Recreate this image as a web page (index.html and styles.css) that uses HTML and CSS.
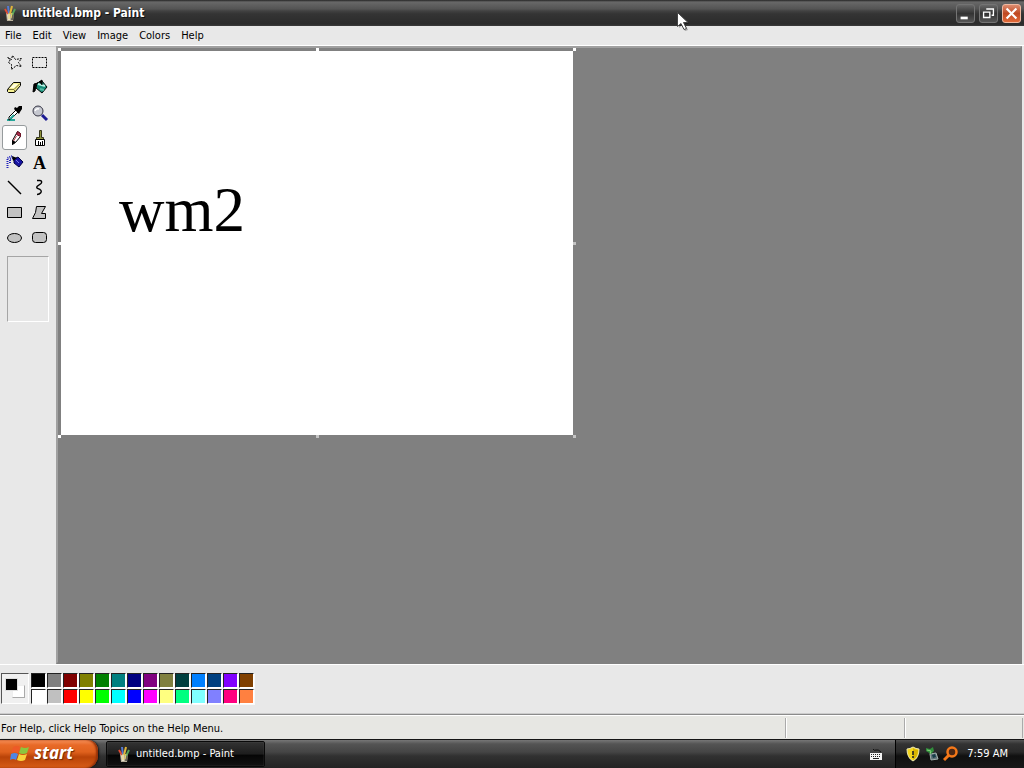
FILE: index.html
```html
<!DOCTYPE html>
<html lang="en">
<head>
<meta charset="utf-8">
<title>untitled.bmp - Paint</title>
<link rel="stylesheet" href="styles.css">
</head>
<body>
<svg class="defs" aria-hidden="true">
  <symbol id="paint" viewBox="0 0 16 16">
    <path d="M4 8h8l-1 8H5z" fill="#b9b19c"/>
    <path d="M5 9l1 6h2V9z" fill="#e8e1cb"/><path d="M10 9h2l-1 6H9z" fill="#686455"/>
    <path d="M3 4l3 5" stroke="#e34b31" stroke-width="2"/>
    <path d="M6 1l1 8" stroke="#5579d0" stroke-width="2"/>
    <path d="M10 1L8 9" stroke="#e0b43b" stroke-width="2"/>
    <path d="M13 4l-3 6" stroke="#55a35a" stroke-width="2"/>
    <path d="M7 8v6M10 8l-1 5" stroke="#e9d36a"/>
  </symbol>
</svg>
<main class="window">
  <header class="titlebar">
    <svg class="icon16"><use href="#paint"/></svg>
    <h1 class="title">untitled.bmp - Paint</h1>
    <div class="controls">
      <button class="control" aria-label="Minimize"><svg viewBox="0 0 19 19"><path d="M4 13h8v3H4z" fill="#fff"/></svg></button>
      <button class="control" aria-label="Restore"><svg viewBox="0 0 19 19" fill="none" stroke="#fff"><path d="M7 4.500h8v7h-2" stroke-width="1.500"/><path d="M4 8h7v6H4z" stroke-width="1.500"/></svg></button>
      <button class="control close" aria-label="Close"><svg viewBox="0 0 19 19"><path d="M4 4l11 11m0-11L4 15" stroke="#fff" stroke-width="2.400"/></svg></button>
    </div>
  </header>
  <nav class="menubar">
    <button class="menu">File</button><button class="menu">Edit</button><button class="menu">View</button><button class="menu">Image</button><button class="menu">Colors</button><button class="menu">Help</button>
  </nav>
  <div class="body">
    <aside class="toolbox">
      <div class="tools">
        <button class="tool" aria-label="Free-form select"><svg viewBox="0 0 25 25"><path d="M5.500 7.500l4 2 1-4 3 4 6-1-3 4 3 4-5-1-5 4 0-5-3-2 2-3z" fill="none" stroke="#000" stroke-dasharray="2 1"/></svg></button>
        <button class="tool" aria-label="Select"><svg viewBox="0 0 25 25"><path d="M5.500 7.500h14v10h-14z" fill="none" stroke="#000" stroke-dasharray="2 1"/></svg></button>
        <button class="tool" aria-label="Eraser"><svg viewBox="0 0 25 25"><path d="M5.500 14.500l6-7h7v3l-6 7h-6l-1-1z" fill="#f5f090" stroke="#000"/><path d="M6 14.500h6l6-6M12.500 15v2" fill="none" stroke="#77713b"/><path d="M8 13l4-4h4l-4 4z" fill="#fffde0"/></svg></button>
        <button class="tool" aria-label="Fill"><svg viewBox="0 0 25 25"><path d="M10 8l5-2 5 6-5 6-6-5z" fill="#178b77" stroke="#000"/><path d="M11 9l7 2" stroke="#b9f1e4" stroke-width="2"/><path d="M15 10V5l-3 2M11 8l-4 1-1 8 2-1 1-6" fill="#000" stroke="#000"/><path d="M13 14l4 1" stroke="#55bba5" stroke-width="2"/></svg></button>
        <button class="tool" aria-label="Pick color"><svg viewBox="0 0 25 25"><path d="M5 19h8v2H5z" fill="#25a699"/><path d="M7 20v-3l7-7 2 2-7 7z" fill="#fff" stroke="#000"/><path d="M8 19l4-4" stroke="#24a69a" stroke-width="2"/><path d="M12 9l5 5 1-2 2-3V6h-3l-2 2-2-1z"/></svg></button>
        <button class="tool" aria-label="Magnifier"><svg viewBox="0 0 25 25"><circle cx="11" cy="11" r="5" fill="#c5c7cf" stroke="#353544"/><path d="M8 11q1-3 4-2" fill="none" stroke="#fff" stroke-width="1.500"/><path d="M15 15l5 5" stroke="#1c1b92" stroke-width="3"/></svg></button>
        <button class="tool active" aria-label="Pencil" aria-pressed="true"><svg viewBox="0 0 23 23"><path d="M9.500 18.500v-4l5-9 3 2v3l-5 6z" fill="#fff" stroke="#000"/><path d="M14.500 5.500l3 2v3l-4-2z" fill="#ad3150" stroke="#701326"/><path d="M13.500 10l-3 5" stroke="#bd3c4d"/><path d="M9 14l4 2-4 3z"/></svg></button>
        <button class="tool" aria-label="Brush"><svg viewBox="0 0 25 25"><path d="M12.500 5.500h2v7h2v3h-7v-3h3z" fill="#8d923b" stroke="#34351b"/><path d="M8.500 14.500h9v6h-9z" fill="#fff" stroke="#000"/><path d="M11.500 16v4m2-3v3m2-4v4" stroke="#000"/></svg></button>
        <button class="tool" aria-label="Airbrush"><svg viewBox="0 0 25 25"><path d="M5.500 18V8l5-2M8 13V9l3-1" fill="none" stroke="#2223bb" stroke-width="2" stroke-dasharray="1 1"/><path d="M12 9l4-2 5 5-4 5-5-4z" fill="#1713a2" stroke="#000040"/><path d="M10 6l5 2-4 3z"/><path d="M14 10l3 3" stroke="#7776ec"/></svg></button>
        <button class="tool" aria-label="Text"><span class="letter">A</span></button>
        <button class="tool" aria-label="Line"><svg viewBox="0 0 25 25"><path d="M6 6l13 13" stroke="#000" stroke-width="1.400"/></svg></button>
        <button class="tool" aria-label="Curve"><svg viewBox="0 0 25 25"><path d="M10 5.500h3c2 0 2 2 1 3l-4 3c-1 2 1 2 3 3 3 2 0 5-3 5" fill="none" stroke="#000" stroke-width="1.400"/></svg></button>
        <button class="tool" aria-label="Rectangle"><svg viewBox="0 0 25 25"><path d="M5.500 7.500h14v10h-14z" fill="#c2c2c2" stroke="#000"/></svg></button>
        <button class="tool" aria-label="Polygon"><svg viewBox="0 0 25 25"><path d="M9.500 6.500h9l-4 7h4v5h-13l3-6z" fill="#c2c2c2" stroke="#000"/></svg></button>
        <button class="tool" aria-label="Ellipse"><svg viewBox="0 0 25 25"><ellipse cx="12.500" cy="13" rx="7" ry="4.500" fill="#c2c2c2" stroke="#000"/></svg></button>
        <button class="tool" aria-label="Rounded rectangle"><svg viewBox="0 0 25 25"><rect x="5.500" y="7.500" width="14" height="10" rx="3" fill="#c2c2c2" stroke="#000"/></svg></button>
      </div>
      <div class="options"></div>
    </aside>
    <section class="workspace" aria-label="Drawing area">
      <div class="canvas">
        <span class="drawn">wm2</span>
        <i class="handle top left"></i><i class="handle top mid"></i><i class="handle top right"></i>
        <i class="handle center left"></i><i class="handle center right"></i>
        <i class="handle bottom left"></i><i class="handle bottom mid"></i><i class="handle bottom right"></i>
      </div>
    </section>
  </div>
  <section class="colorbox" aria-label="Colors">
    <div class="current"><i class="back"></i><i class="fore"></i></div>
    <div class="palette" id="palette"></div>
  </section>
  <footer class="statusbar">
    <span class="help">For Help, click Help Topics on the Help Menu.</span><span class="cell"></span><span class="cell"></span>
  </footer>
</main>
<footer class="taskbar">
  <button class="start">
    <svg viewBox="0 0 20 18"><path d="M3 3q4-2 7 0L8 9Q5 7 1 9z" fill="#ed5a27"/><path d="M11 3q4 2 8 0l-2 6q-4 2-8 0z" fill="#8cc63e"/><path d="M1 10q4-2 7 0l-2 6q-3-2-6 0z" fill="#4f86e4"/><path d="M9 10q4 2 8 0l-2 6q-4 2-8 0z" fill="#f9d23b"/></svg>
    <span>start</span>
  </button>
  <button class="task"><svg class="icon16"><use href="#paint"/></svg><span>untitled.bmp - Paint</span></button>
  <button class="keyboard" aria-label="Keyboard"><svg viewBox="0 0 14 14"><path d="M4 2q1 2 3 1t5 2" fill="none" stroke="#111"/><path d="M1 6h12v7H1z" fill="#f4f4f4"/><path d="M2 7.500h10M2 9.500h10" stroke="#222" stroke-dasharray="1 1"/><path d="M4 11.500h6" stroke="#222"/></svg></button>
  <div class="tray">
    <svg class="icon16" viewBox="0 0 16 16"><path d="M8 1q3 2 6 2 0 9-6 12Q2 12 2 3q3 0 6-2z" fill="#f4d61d" stroke="#eee9b0"/><path d="M8 2v12q5-3 5-10-3 0-5-2z" fill="#d8b400"/><path d="M8 5v4m0 1v2" stroke="#222" stroke-width="1.600"/></svg>
    <svg class="icon16" viewBox="0 0 16 16"><path d="M6 8l6-1 2 6-7 1z" fill="#607378" stroke="#a2b2af"/><path d="M8 9l3-1 1 3-3 1z" fill="#173e4a"/><path d="M2 2l4 1 3-2 1 4-3 3-5-3z" fill="#318e3c"/><path d="M3 4l4 1-1 3" stroke="#8ad37c" fill="none"/></svg>
    <svg class="icon16" viewBox="0 0 16 16"><circle cx="9" cy="6" r="4.500" fill="#4c2815" stroke="#f57819" stroke-width="2.500"/><path d="M6 9l-5 5" stroke="#f57819" stroke-width="3"/></svg>
    <time class="clock">7:59 AM</time>
  </div>
</footer>
<svg class="cursor" viewBox="0 0 14 22" aria-hidden="true"><path d="M2 2v14l3-3 3 6 3-1-3-6h4z" fill="#000" opacity=".3"/><path d="M.5.5v14l3.500-3 3 6 2.500-1-3-6H11z" fill="#fff" stroke="#444"/></svg>
<script src="palette.js"></script>
</body>
</html>
```
FILE: styles.css
```css
* { box-sizing: border-box; }
body { margin: 0; height: 100vh; display: flex; flex-direction: column; overflow: hidden; font: 11px/14px "DejaVu Sans Condensed", "Noto Sans", sans-serif; color: #000; background: #e8e8e8; }
button { font: inherit; color: inherit; border: 0; padding: 0; margin: 0; background: none; }
svg { display: block; flex: none; }
.defs { width: 0; height: 0; position: absolute; }
.icon16 { width: 16px; height: 16px; }
.window { flex: 1; min-height: 0; display: flex; flex-direction: column; }
.titlebar { flex: none; height: 26px; padding: 0 3px 0 2px; display: flex; align-items: center; gap: 4px; color: #fff; background: linear-gradient(#252525, #686868 2px, #545454 9px, #414141 11px, #343434 14px, #2b2b2b 24px, #3b3b3b); }
.title { margin: 0; font: bold 12px/16px "DejaVu Sans Condensed", "Noto Sans", sans-serif; text-shadow: 1px 1px #111; }
.controls { margin-left: auto; display: flex; gap: 4px; }
.control { width: 19px; height: 19px; border: 1px solid #747474; border-radius: 3px; background: linear-gradient(#686868, #333 50%, #555); }
.control svg { width: 17px; height: 17px; }
.close { border-color: #efb8a0; background: linear-gradient(#dc8c70, #bf4922 50%, #e36a38); }
.menubar { flex: none; height: 20px; display: flex; padding-left: 5px; gap: 11px; border-bottom: 1px solid #fff; }
.menu { height: 19px; line-height: 19px; }
.body { flex: 1; min-height: 0; display: flex; }
.toolbox { width: 56px; flex: none; padding: 3px 0 0 2px; border-top: 1px solid #d0d0d0; }
.tools { display: grid; grid-template-columns: 25px 25px; grid-auto-rows: 25px; }
.tool { display: grid; place-items: center; }
.tool svg { width: 25px; height: 25px; }
.tool.active { border: 1px solid #969b9d; border-radius: 3px; background: #fff; }
.tool.active svg { width: 23px; height: 23px; }
.letter { font: bold 18px/20px "Liberation Serif", serif; }
.options { width: 42px; height: 66px; margin: 6px 0 0 5px; border: 1px solid; border-color: #a5a5a5 #fff #fff #a5a5a5; }
.workspace { flex: 1; min-width: 0; margin-right: 2px; padding: 3px; border: 2px solid #808080; border-color: #a0a0a0 #808080 #808080 #a0a0a0; background: #808080; overflow: hidden; }
.canvas { position: relative; width: 512px; height: 384px; background: #fff; padding: 124px 0 0 58px; }
.drawn { font: 63px/70px "Liberation Serif", serif; display: block; }
.handle { position: absolute; width: 3px; height: 3px; background: #c4c4c4; }
.top { top: -3px; background: #fff; }
.center { top: calc(50% - 1px); }
.bottom { bottom: -3px; }
.left { left: -3px; background: #fff; }
.mid { left: calc(50% - 1px); }
.right { right: -3px; }
.colorbox { flex: none; height: 50px; display: flex; gap: 2px; padding: 8px 1px; border-top: 1px solid #fff; }
.current { position: relative; width: 28px; height: 31px; border: 1px solid; border-color: #555 #fff #fff #555; background: #f0f0f0; }
.fore, .back { position: absolute; width: 13px; height: 13px; border: 1px solid #bbb; }
.fore { left: 3px; top: 4px; background: #000; border-color: #ddd; }
.back { left: 10px; top: 11px; background: #fff; border-color: #eee #aaa #aaa #eee; }
.palette { display: grid; grid-template-columns: repeat(14, 16px); grid-auto-rows: 16px; }
.swatch { width: 15px; height: 15px; border: 1px solid; border-color: #222 #fff #fff #222; background: var(--color); background-clip: padding-box; box-shadow: 1px 1px #fafafa; }
.statusbar { flex: none; height: 25px; display: flex; align-items: stretch; padding: 3px 1px 1px; border-top: 1px solid #8b8b8b; box-shadow: inset 0 1px #fff, 0 -1px #ccc; background: #e7e7e3; }
.help { flex: 1; line-height: 21px; }
.cell { width: 119px; border-left: 1px solid #aaa; box-shadow: inset 1px 0 #fff; }
.cell:last-child { border-right: 1px solid #aaa; }
.taskbar { flex: none; height: 29px; display: flex; align-items: stretch; color: #fff; border-top: 1px solid #151515; background: linear-gradient(#777, #545454 4px, #454545 12px, #313131 16px, #242424); }
.start { width: 98px; display: flex; align-items: center; gap: 4px; padding: 0 0 3px 10px; border-radius: 0 10px 12px 0; background: linear-gradient(#f69059, #e86a28 5px, #df611d 12px, #b94308 17px, #d45a16 27px); box-shadow: 1px 0 2px #111, inset -2px 0 2px #933007; font: italic bold 17px/24px "Noto Sans", sans-serif; text-shadow: 1px 1px 1px #702800; }
.start svg { width: 20px; height: 18px; }
.task { width: 159px; margin: 1px 0 1px 8px; display: flex; align-items: center; gap: 4px; padding-left: 9px; border: 1px solid #090909; border-radius: 2px; background: linear-gradient(#333, #1d1d1d 50%, #050505 55%, #121212); box-shadow: inset 0 0 1px #777; }
.keyboard { margin-left: auto; padding: 0 12px; }
.keyboard svg { width: 14px; height: 14px; }
.tray { display: flex; align-items: center; gap: 3px; padding: 0 16px 0 9px; border-left: 1px solid #000; background: linear-gradient(#555, #333 4px, #292929 12px, #101010 16px, #181818); }
.clock { margin-left: 5px; }
.cursor { position: absolute; left: 677px; top: 12px; width: 14px; height: 22px; }
```
FILE: palette.js
```js
const colors = [
  ["Black", "#000"], ["Gray", "#808080"], ["Dark red", "#800000"], ["Olive", "#808000"],
  ["Green", "#008000"], ["Teal", "#008080"], ["Navy", "#000080"], ["Purple", "#800080"],
  ["Khaki", "#808040"], ["Dark teal", "#004040"], ["Azure", "#0080ff"], ["Steel blue", "#004080"],
  ["Violet", "#8000ff"], ["Brown", "#804000"],
  ["White", "#fff"], ["Silver", "#c0c0c0"], ["Red", "#f00"], ["Yellow", "#ff0"],
  ["Lime", "#0f0"], ["Cyan", "#0ff"], ["Blue", "#00f"], ["Magenta", "#f0f"],
  ["Light yellow", "#ffff80"], ["Spring green", "#00ff80"], ["Light cyan", "#80ffff"], ["Lavender", "#8080ff"],
  ["Rose", "#ff0080"], ["Orange", "#ff8040"]
];
const palette = document.getElementById("palette");
for (const [name, color] of colors) {
  const swatch = document.createElement("button");
  swatch.className = "swatch";
  swatch.setAttribute("aria-label", name);
  swatch.style.setProperty("--color", color);
  palette.append(swatch);
}
```
